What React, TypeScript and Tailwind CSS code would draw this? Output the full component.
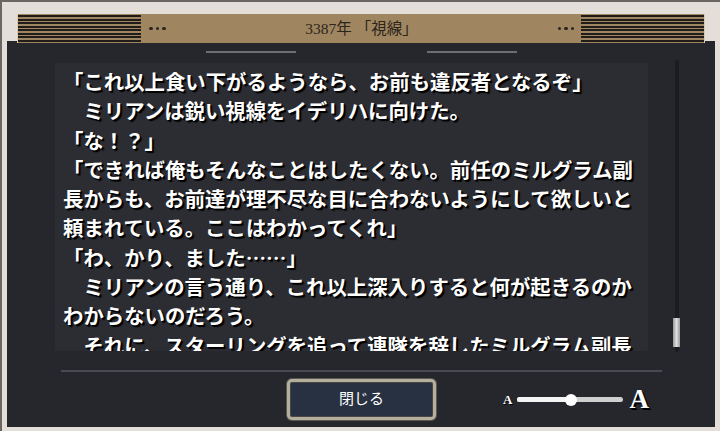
const lines = [
  '「これ以上食い下がるようなら、お前も違反者となるぞ」',
  '　ミリアンは鋭い視線をイデリハに向けた。',
  '「な！？」',
  '「できれば俺もそんなことはしたくない。前任のミルグラム副',
  '長からも、お前達が理不尽な目に合わないようにして欲しいと',
  '頼まれている。ここはわかってくれ」',
  '「わ、かり、ました……」',
  '　ミリアンの言う通り、これ以上深入りすると何が起きるのか',
  'わからないのだろう。',
  '　それに、スターリングを追って連隊を辞したミルグラム副長',
]

const Stripes = () => (
  <div className="flex h-full w-[123px] flex-col justify-center gap-[1.5px] py-[1px]">
    {Array.from({ length: 8 }).map((_, i) => (
      <div key={i} className="h-[2px] bg-[#1f1c19]"></div>
    ))}
  </div>
)

const Dots = () => (
  <div className="flex items-center gap-[3px]">
    <div className="h-[3.5px] w-[3.5px] rounded-full bg-[#2a2520]"></div>
    <div className="h-[3.5px] w-[3.5px] rounded-full bg-[#2a2520]"></div>
    <div className="h-[3.5px] w-[3.5px] rounded-full bg-[#2a2520]"></div>
  </div>
)

const App = () => {
  return (
    <div className="h-[431px] w-[720px] overflow-hidden border-t-2 border-l-2 border-[#6a6763] bg-[#e3ded8] font-['Liberation_Serif','Noto_Sans_CJK_JP',serif]">
      <div className="flex flex-col px-[5px]">
        {/* header */}
        <div className="relative z-10 mx-[10px] mt-[12px] flex h-[29px] items-center border-x border-[#d8ccb4] bg-[#9f8660]">
          <Stripes />
          <div className="ml-[8px]">
            <Dots />
          </div>
          <div className="flex-1 text-center text-[15.5px] leading-none text-[#2b241b]">3387年 「視線」</div>
          <div className="mr-[7px]">
            <Dots />
          </div>
          <Stripes />
        </div>

        {/* panel */}
        <div className="-mt-[2px] h-[386px] bg-[#26272c]">
          <div className="mt-[10px] flex justify-center gap-[131px]">
            <div className="h-[2px] w-[90px] bg-[#6e6e70]"></div>
            <div className="h-[2px] w-[90px] bg-[#6e6e70]"></div>
          </div>

          <div className="mt-[7px] flex items-start pl-[48px]">
            <div className="mt-[3px] h-[288px] w-[593px] overflow-hidden bg-[#2c2d33] pt-[4px] pl-[8px] font-['Noto_Sans_CJK_JP',sans-serif]">
              {lines.map((l, i) => (
                <div
                  key={i}
                  className="whitespace-nowrap text-[20.4px] leading-[29.3px] font-bold text-white [text-shadow:1px_1px_0_#000,2px_2px_1px_#000]"
                >
                  {l}
                </div>
              ))}
            </div>
            <div className="relative ml-[25px] flex h-[292px] w-[7px] justify-center">
              <div className="h-full w-[4px] rounded-full bg-[#1b1c20]"></div>
              <div className="absolute top-[258px] left-0 h-[29px] w-[7px] bg-gradient-to-r from-[#9a9a9a] via-[#e0e0e0] to-[#9a9a9a]"></div>
            </div>
          </div>

          <div className="mt-[18px] ml-[54px] h-[2px] w-[601px] bg-[#484a53]"></div>

          <div className="mt-[7px] flex items-center pl-[280px]">
            <button className="flex h-[41px] w-[149px] items-center justify-center rounded-[5px] border-[3px] border-[#b4ae9e] bg-[#283142] text-[15px] text-white shadow-[inset_0_0_0_1px_#4a4740,0_0_0_1px_#5c594f]">
              閉じる
            </button>
            <div className="ml-[67px] flex items-center">
              <span className="text-[13px] leading-none font-bold text-white [text-shadow:1px_1px_0_#000]">A</span>
              <div className="relative ml-[5px] h-[5px] w-[106px] rounded-full bg-[#cfcfcf]">
                <div className="h-full w-[54px] rounded-full bg-[#f4f4f4]"></div>
                <div className="absolute top-1/2 left-[48px] h-[12px] w-[12px] -translate-y-1/2 rounded-full bg-white"></div>
              </div>
              <span className="ml-[6px] text-[27px] leading-none font-bold text-white [text-shadow:1px_1px_0_#000,2px_2px_0_#000]">A</span>
            </div>
          </div>
        </div>
      </div>
    </div>
  )
}

export default App
